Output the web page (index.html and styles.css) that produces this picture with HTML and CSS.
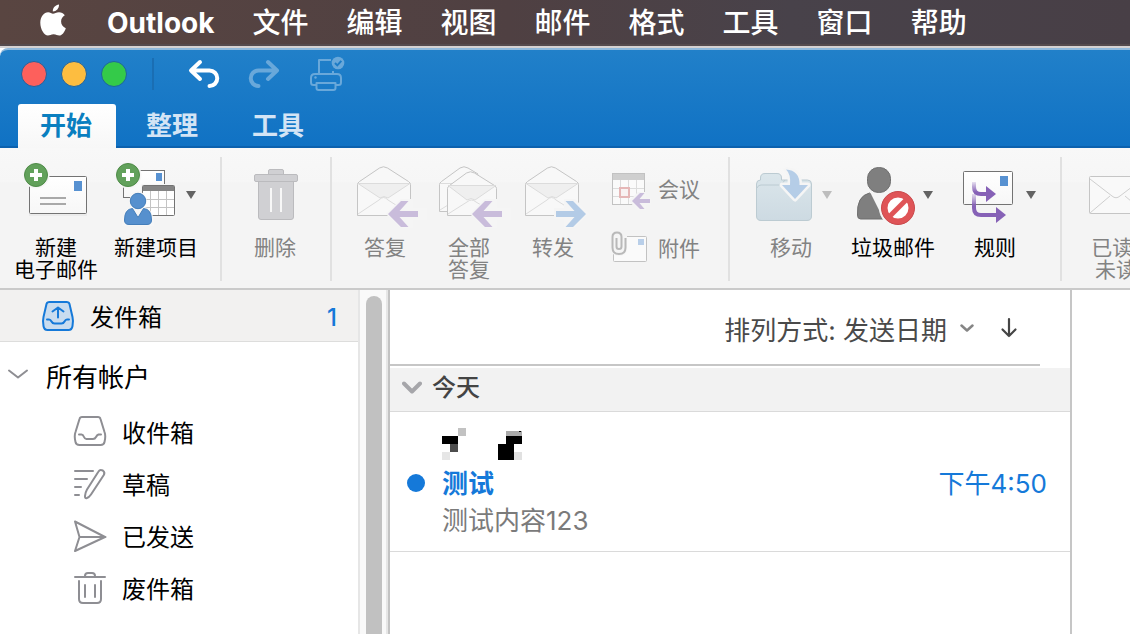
FILE: index.html
```html
<!DOCTYPE html>
<html lang="zh-CN">
<head>
<meta charset="utf-8">
<title>Outlook</title>
<link rel="stylesheet" href="styles.css">
</head>
<body>
<svg width="0" height="0" class="defs" aria-hidden="true">
  <defs>
    <linearGradient id="paper" x1="0" y1="0" x2="0" y2="1"><stop offset="0" stop-color="#fff"/><stop offset="1" stop-color="#f7f7f7"/></linearGradient>
    <linearGradient id="folder" x1="0" y1="0" x2="0" y2="1"><stop offset="0" stop-color="#dbe6eb"/><stop offset="1" stop-color="#cddae2"/></linearGradient>
    <linearGradient id="flow" gradientUnits="userSpaceOnUse" x1="0" y1="181" x2="0" y2="192"><stop offset="0" stop-color="#8661b6" stop-opacity="0.1"/><stop offset="1" stop-color="#8661b6"/></linearGradient>
    <linearGradient id="flow-low" gradientUnits="userSpaceOnUse" x1="0" y1="194" x2="0" y2="206"><stop offset="0" stop-color="#8661b6" stop-opacity="0.2"/><stop offset="1" stop-color="#8661b6"/></linearGradient>
  </defs>
</svg>

<nav class="menubar" aria-label="应用菜单">
  <button class="menu apple" aria-label="Apple">
    <svg width="26" height="32" viewBox="0 0 26 32" fill="#fff"><path d="M13 9.7c1.600 0 3.300-1.500 6-1.500 2.300 0 4.500 1.200 5.800 3.100-2.400 1.500-3.700 3.500-3.700 6.200 0 3.200 1.800 5.500 4.700 6.700-1.200 3.900-3.900 7.400-6.500 7.400-2.200 0-3-1.300-5.700-1.300-2.600 0-3.600 1.300-5.700 1.300C4.200 31.600.3 25.300.3 18.800c0-6.300 3.700-10.500 7.800-10.500 2.200 0 3.600 1.400 4.900 1.400z"/><path d="M19 .4c.3 3.700-2.800 7-6.200 7C12.400 4 15.600.7 19 .4z"/></svg>
  </button>
  <button class="menu app-name">Outlook</button>
  <button class="menu">文件</button>
  <button class="menu">编辑</button>
  <button class="menu">视图</button>
  <button class="menu">邮件</button>
  <button class="menu">格式</button>
  <button class="menu">工具</button>
  <button class="menu">窗口</button>
  <button class="menu">帮助</button>
</nav>

<div class="window">
<header class="titlebar">
  <div class="quick">
    <div class="lights">
      <button class="light red" aria-label="关闭"></button>
      <button class="light yellow" aria-label="最小化"></button>
      <button class="light green" aria-label="全屏"></button>
    </div>
    <span class="quick-sep"></span>
    <button class="tool" aria-label="撤销"><svg width="36" height="36" viewBox="185 56 36 36" fill="none" stroke="#fff" stroke-width="4" stroke-linecap="round" stroke-linejoin="round"><path d="M199 62l-9 8.500 9 8.500M191 70.500h17.500a7.750 7.750 0 010 15.500"/></svg></button>
    <button class="tool" aria-label="重做"><svg width="36" height="36" viewBox="245 56 36 36" fill="none" stroke="#69a8da" stroke-width="4" stroke-linecap="round" stroke-linejoin="round"><path d="M267 62l9 8.500-9 8.500M275 70.500h-17.500a7.750 7.750 0 000 15.500"/></svg></button>
    <button class="tool" aria-label="打印"><svg width="38" height="38" viewBox="308 54 38 38" fill="none" stroke="#69a8da" stroke-width="2"><path d="M319 73V59h12M316 84h-2.500q-2.500 0-2.500-2.500V77q0-4 4-4h22q4 0 4 4v4.500q0 2.500-2.500 2.500H336M316.500 82h19v5q0 2-2 2h-15q-2 0-2-2z" stroke-linejoin="round"/><path d="M333 70v3"/><circle cx="315.500" cy="76.500" r="1.200" fill="#69a8da" stroke="none"/><circle cx="338" cy="62" r="6.300" fill="#69a8da" stroke="none"/><path d="M335 62l2.300 2.400 4-4.500" stroke="#1c7bc6"/></svg></button>
  </div>
  <div class="tabs" role="tablist">
    <button class="tab active" role="tab" aria-selected="true">开始</button>
    <button class="tab" role="tab" aria-selected="false">整理</button>
    <button class="tab" role="tab" aria-selected="false">工具</button>
  </div>
</header>

<section class="ribbon" aria-label="开始">
  <div class="group create">
    <button class="cmd">
      <svg width="84" height="66" viewBox="14 162 84 66"><rect x="29.500" y="176.500" width="57" height="37" rx="1" fill="url(#paper)" stroke="#737373"/><path d="M29 215h58" stroke="#e2e2e2"/><rect x="74" y="181" width="8" height="10" fill="#5791d1"/><path d="M40 198h26M40 204h26" stroke="#a9a9a9" stroke-width="2"/><circle cx="36" cy="175" r="13.500" fill="#f6f6f6"/><circle cx="36" cy="175" r="11.500" fill="#62a15b" stroke="#4e8b47"/><path d="M36 169v12M30 175h12" stroke="#fff" stroke-width="4"/></svg>
      <span>新建<br>电子邮件</span>
    </button>
    <button class="cmd">
      <svg width="84" height="66" viewBox="114 162 84 66"><rect x="123.500" y="170.500" width="41" height="27" fill="url(#paper)" stroke="#737373"/><rect x="156" y="173" width="6" height="8" fill="#5791d1"/><rect x="141" y="184" width="36" height="34" fill="#f6f6f6"/><rect x="142.500" y="185.500" width="32" height="30" rx="1" fill="#fff" stroke="#737373"/><path d="M143 186h31v5h-31z" fill="#858585"/><path d="M150.500 191v24M158.500 191v24M166.500 191v24M143 199.500h31M143 207.500h31" stroke="#c4c4c4"/><circle cx="128" cy="175" r="13.500" fill="#f6f6f6"/><circle cx="128" cy="175" r="11.500" fill="#62a15b" stroke="#4e8b47"/><path d="M128 169v12M122 175h12" stroke="#fff" stroke-width="4"/><path d="M138 191a10 10 0 016.500 16q9.500 2.500 9.500 19h-32q0-16.500 9.500-19A10 10 0 01138 191z" fill="#f6f6f6"/><path d="M138 224.500h-9q-4.500 0-4.500-4.500 0-11 8-11.500l5.500 9 5.500-9q8 .5 8 11.500 0 4.500-4.500 4.500z" fill="#5690ce" stroke="#447eba"/><circle cx="138" cy="201" r="7.700" fill="#5690ce" stroke="#447eba"/><path d="M186 191h10l-5 8z" fill="#636363"/></svg>
      <span>新建项目</span>
    </button>
  </div>
  <div class="group remove">
    <button class="cmd" disabled>
      <svg width="84" height="66" viewBox="233 162 84 66" fill="#d0d0d3" stroke="#bbbbbe"><rect x="268.500" y="169.500" width="15" height="6" rx="1.500"/><path d="M258.500 181h35v36q0 2.500-2.500 2.500h-30q-2.500 0-2.500-2.500z"/><rect x="254.500" y="174.500" width="43" height="7" rx="1.500"/><path d="M271 188v24M281 188v24" stroke="#f7f7f7" stroke-width="2"/></svg>
      <span>删除</span>
    </button>
  </div>
  <div class="group respond">
    <button class="cmd" disabled>
      <svg width="84" height="66" viewBox="343 162 84 66"><path d="M357.500 215.500v-31q0-1.500 2-3l20-13.500q4-2.500 8 0l21 13.500q2 1.500 2 3v31z" fill="#f8f8f8" stroke="#c5c5c5"/><path d="M358 183.500h52L388 198q-4-3-8 0z" fill="#efefef" stroke="#dcdcdc"/><path d="M358 214l21-14q4.500-5 9 0l22 14" fill="none" stroke="#dcdcdc"/><path d="M386 214l15-15h12v9h14v12h-14v9h-12z" fill="#f5f5f5"/><path d="M388 214l13-13h7.500l-9 10H418v6h-18.500l9 10H401z" fill="#c9bcdb"/></svg>
      <span>答复</span>
    </button>
    <button class="cmd" disabled>
      <svg width="84" height="66" viewBox="427 162 84 66"><path d="M439.500 211.500v-27q0-1.500 2-3L460 168q4-2.500 8 0l10 6-20 37.500z" fill="#f8f8f8" stroke="#c5c5c5"/><path d="M440 183.500h15M440 210l8-5" stroke="#dcdcdc"/><path d="M447.500 215.500v-27q0-1.500 2-3l17-12.500q4-2.500 8 0l20 12.500q2 1.500 2 3v27z" fill="#f8f8f8" stroke="#c5c5c5"/><path d="M448 185.500h48L475 200q-4-3-8 0z" fill="#efefef" stroke="#dcdcdc"/><path d="M448 214l19-12q4.500-4 9 0l20 12" fill="none" stroke="#dcdcdc"/><path d="M470 214l15-15h12v9h14v12h-14v9h-12z" fill="#f5f5f5"/><path d="M472 214l13-13h7.500l-9 10H502v6h-18.500l9 10H485z" fill="#c9bcdb"/></svg>
      <span>全部<br>答复</span>
    </button>
    <button class="cmd" disabled>
      <svg width="84" height="66" viewBox="511 162 84 66"><path d="M525.500 215.500v-31q0-1.500 2-3l20-13.500q4-2.500 8 0l21 13.500q2 1.500 2 3v31z" fill="#f8f8f8" stroke="#c5c5c5"/><path d="M526 183.500h52L556 198q-4-3-8 0z" fill="#efefef" stroke="#dcdcdc"/><path d="M526 214l21-14q4.500-5 9 0l22 14" fill="none" stroke="#dcdcdc"/><path d="M554 208h10v-9h11l15 15-15 14h-11v-9h-10z" fill="#f5f5f5"/><path d="M586 214l-13-13h-7.500l9 10H556v6h18.500l-9 10h7.500z" fill="#b3cbe6"/></svg>
      <span>转发</span>
    </button>
    <div class="stack">
      <button class="small" disabled>
        <svg width="40" height="40" viewBox="611 170 40 40"><rect x="612.500" y="173.500" width="32" height="31" fill="#fafafa" stroke="#c2c2c2"/><path d="M613 174h31v6h-31z" fill="#cfcfcf"/><path d="M620.500 180v24M628.500 180v24M636.500 180v24M613 188.500h31M613 196.500h31" stroke="#dcdcdc"/><rect x="620" y="188" width="9" height="9" fill="#f8f2f2" stroke="#e5b7b7" stroke-width="2"/><path d="M629 201l9-9h8v6h5v7h-5v6h-8z" fill="#f5f5f5"/><path d="M632 201l8-8h4.500l-5 6H650v4h-10.500l5 6H640z" fill="#c9bcdb"/></svg>
        <span>会议</span>
      </button>
      <button class="small" disabled>
        <svg width="40" height="40" viewBox="611 229 40 40"><rect x="613.500" y="236.500" width="33" height="25" rx="1" fill="#fafafa" stroke="#c2c2c2"/><rect x="638" y="239" width="6" height="6" fill="#b9cfe9"/><path d="M611 236h16v12q0 8-8 8-6 0-8-5z" fill="#f5f5f5"/><path d="M616.500 238v8.500q0 2.500 2.500 2.500t2.500-2.500V237q0-4.500-4.500-4.500t-4.500 4.500v10.500q0 6.500 6.500 6.500t6.500-6.500V238" fill="none" stroke="#b9b9b9" stroke-width="2"/></svg>
        <span>附件</span>
      </button>
    </div>
  </div>
  <div class="group organize">
    <button class="cmd" disabled>
      <svg width="84" height="66" viewBox="749 162 84 66"><path d="M756.500 216v-32q0-4 4-4v-2q0-4.500 4.500-4.500h12q4.500 0 4.500 4.500v2h26q4 0 4 4v32q0 4.500-4.500 4.500H761q-4.500 0-4.500-4.500z" fill="url(#folder)" stroke="#bccbd2"/><path d="M757 188q1-3 4-3h20l4-5" fill="none" stroke="#bccbd2"/><path d="M786 169.500q14 1 13.500 15.500h8.500l-13 14-13-14h8q1-11-4-15.500z" fill="#b5cde7" stroke="#f5f5f5" stroke-width="5" stroke-linejoin="round"/><path d="M786 169.500q14 1 13.500 15.500h8.500l-13 14-13-14h8q1-11-4-15.500z" fill="#b5cde7"/><path d="M822 191h10l-5 8z" fill="#bdbdbd"/></svg>
      <span>移动</span>
    </button>
    <button class="cmd">
      <svg width="84" height="66" viewBox="852 162 84 66"><path d="M858.500 215q-1-19 12-22 9 8 14 1l10 7v18h-33q-3 0-3-4z" fill="#7f7f7f" stroke="#6f6f6f"/><path d="M871 192l12 24 8-24z" fill="#f5f5f5"/><rect x="868.500" y="167.500" width="23" height="25" rx="11" fill="#7f7f7f" stroke="#6f6f6f"/><circle cx="899" cy="208" r="19" fill="#f5f5f5"/><circle cx="899" cy="208" r="13.500" fill="#fff" stroke="#df5457" stroke-width="6"/><path d="M890 217l18-18" stroke="#df5457" stroke-width="5"/><circle cx="899" cy="208" r="16.500" fill="none" stroke="#c9494c"/><path d="M924 191h10l-5 8z" fill="#636363"/></svg>
      <span>垃圾邮件</span>
    </button>
    <button class="cmd">
      <svg width="84" height="66" viewBox="953 162 84 66"><rect x="963.500" y="171.500" width="49" height="33" rx="1" fill="url(#paper)" stroke="#737373"/><rect x="1000" y="176" width="8" height="10" fill="#5791d1"/><path d="M974 182v5q0 7 7 7h6" fill="none" stroke="url(#flow)" stroke-width="4"/><path d="M986 186l10 8-10 8z" fill="#8661b6"/><path d="M974 194v14q0 7 7 7h15" fill="none" stroke="url(#flow-low)" stroke-width="4"/><path d="M996 207l10 8-10 8z" fill="#8661b6"/><path d="M1026 191h10l-5 8z" fill="#636363"/></svg>
      <span>规则</span>
    </button>
  </div>
  <div class="group status">
    <button class="cmd" disabled>
      <svg width="84" height="66" viewBox="1074 162 84 66"><rect x="1089.500" y="176.500" width="56" height="37" rx="1" fill="#f9f9f9" stroke="#c5c5c5"/><path d="M1090 213l20-17M1145 213l-20-17M1090 179l22 17q4 3.500 8 0l25-19" fill="none" stroke="#cfcfcf"/></svg>
      <span>已读/<br>未读</span>
    </button>
  </div>
</section>

<main class="content">
  <nav class="sidebar" aria-label="文件夹">
    <a class="folder outbox" href="#outbox">
      <svg width="34" height="32" viewBox="41 299 34 32" fill="none" stroke="#1579d9" stroke-width="2" stroke-linejoin="round" stroke-linecap="round"><path d="M49.500 301h17q2.500 0 3 2l3 13q1 4 0 9-.6 4-4 4h-21q-3.400 0-4-4-1-5 0-9l3-13q.5-2 3-2z" fill="#c9dcef"/><path d="M47 318.500h2q1.500 0 2.500 2t3 2h7q2 0 3-2t2.500-2h2M58 316.500v-10M52.500 310.500l5.500-4 5.500 4"/></svg>
      <span>发件箱</span>
      <span class="count">1</span>
    </a>
    <button class="accounts" aria-expanded="true">
      <svg width="22" height="12" viewBox="0 0 22 12" fill="none" stroke="#8e8e93" stroke-width="2" stroke-linecap="round" stroke-linejoin="round"><path d="M2 2.500l9 7 9-7"/></svg>
      <span>所有帐户</span>
    </button>
    <a class="folder" href="#inbox">
      <svg width="34" height="36" viewBox="73 414 34 36" fill="none" stroke="#8e8e93" stroke-width="2" stroke-linejoin="round" stroke-linecap="round"><path d="M82 417h16q2 0 2.500 2l4 13q1.500 4 0 10-.6 3-4 3h-21q-3.400 0-4-3-1.500-6 0-10l4-13q.5-2 2.500-2z"/><path d="M79 434.500h2.500q1.500 0 2.500 2.500t3 2h6q2 0 3-2t2.500-2.500h2.500"/></svg>
      <span>收件箱</span>
    </a>
    <a class="folder" href="#drafts">
      <svg width="34" height="36" viewBox="73 466 34 36" fill="none" stroke="#8e8e93" stroke-width="2" stroke-linejoin="round" stroke-linecap="round"><path d="M75 471h18M75 479h12M75 487h6M75 495h4M98.500 471.500q1.500-2.500 4.300-1 2.500 1.800 1 4.500L91 494.500q-2 3-4.500 3.800-1.800 0-1.500-2.300.5-4 2-6.500z"/></svg>
      <span>草稿</span>
    </a>
    <a class="folder" href="#sent">
      <svg width="34" height="36" viewBox="73 518 34 36" fill="none" stroke="#8e8e93" stroke-width="2" stroke-linejoin="round" stroke-linecap="round"><path d="M75 521.500l30 15.500L75 551l4.500-14zM79.500 537h26"/></svg>
      <span>已发送</span>
    </a>
    <a class="folder" href="#deleted">
      <svg width="34" height="36" viewBox="73 570 34 36" fill="none" stroke="#8e8e93" stroke-width="2" stroke-linejoin="round" stroke-linecap="round"><path d="M75 577h30M85 577v-1q0-3 3-3h4q3 0 3 3v1M79 581v18q0 4 4 4h14q4 0 4-4v-18M85 585v12M95 585v12"/></svg>
      <span>废件箱</span>
    </a>
  </nav>
  <div class="scrollbar"><div class="thumb"></div></div>
  <section class="list" aria-label="邮件列表">
    <div class="sort">
      <button class="sort-by">排列方式: 发送日期
        <svg width="14" height="10" viewBox="0 0 14 10" fill="none" stroke="#858585" stroke-width="2.500" stroke-linecap="round" stroke-linejoin="round"><path d="M1.500 2.500L7 7.500l5.500-5"/></svg>
      </button>
      <button class="sort-dir" aria-label="降序"><svg width="18" height="22" viewBox="0 0 18 22" fill="none" stroke="#454545" stroke-width="2.200" stroke-linecap="round" stroke-linejoin="round"><path d="M9 2v17M2.500 12.500L9 19l6.500-6.500"/></svg></button>
    </div>
    <button class="day" aria-expanded="true">
      <svg width="20" height="14" viewBox="0 0 20 14" fill="none" stroke="#a6a6aa" stroke-width="4" stroke-linecap="round" stroke-linejoin="round"><path d="M2 2.500l8 8 8-8"/></svg>
      <span>今天</span>
    </button>
    <article class="message">
      <svg class="sender" width="82" height="32" viewBox="0 0 82 32" shape-rendering="crispEdges"><path d="M16 0h8v8h-8z" fill="#c2c2c2"/><path d="M0 8h16v8H0z"/><path d="M8 16h8v8H8z" fill="#4d4d4d"/><path d="M0 24h8v8H0z" fill="#e6e6e6"/><path d="M64 3h16v5H64z" fill="#aaa"/><path d="M77 3h2v1h-2zM64 8h16v8h-8v16H56V16h8z"/><path d="M72 24h8v8h-8z" fill="#e1e1e1"/></svg>
      <div class="subject"><span class="unread"></span><strong>测试</strong><time>下午4:50</time></div>
      <p class="preview">测试内容123</p>
    </article>
  </section>
  <section class="reading" aria-label="阅读窗格"></section>
</main>
</div>
</body>
</html>
```
FILE: styles.css
```css
* { box-sizing: border-box; }
html, body { height: 100%; }
body {
  margin: 0;
  display: flex;
  flex-direction: column;
  overflow: hidden;
  background: #fff;
  color: #000;
  font-family: Inter, "Noto Sans CJK SC", sans-serif;
}
button {
  margin: 0;
  padding: 0;
  border: 0;
  background: none;
  color: inherit;
  font: inherit;
}
a { color: inherit; text-decoration: none; }
svg { display: block; flex: none; }
.defs { position: absolute; }

/* System menu bar */
.menubar {
  flex: none;
  display: flex;
  align-items: center;
  gap: 38px;
  height: 46px;
  padding-left: 40px;
  border-bottom: 2px solid #554b4e;
  background: linear-gradient(90deg, #594541 0%, #4f4042 45%, #48424a 70%, #483f46 100%);
  color: #fff;
  font-size: 28px;
  line-height: 44px;
  white-space: nowrap;
}
.menu { padding-top: 1px; font-weight: 500; }
.apple { padding: 0 0 4px; margin-right: 3px; }
.app-name { font-weight: 700; }

/* Window */
.window {
  flex: 1;
  min-height: 0;
  display: flex;
  flex-direction: column;
  border-top: 2px solid #d5d2d2;
}
.titlebar {
  flex: none;
  border-top: 2px solid #8fb9dc;
  border-bottom: 2px solid #0c61ae;
  border-top-left-radius: 8px;
  background: linear-gradient(#2180c9, #1072c4);
}
.quick {
  display: flex;
  align-items: center;
  height: 54px;
  padding: 0 21px 6px;
}
.lights { display: flex; gap: 14px; }
.light {
  width: 26px;
  height: 26px;
  border: 1px solid #1e63a0;
  border-radius: 50%;
}
.red { background: #fd605c; }
.yellow { background: #fdbd40; }
.green { background: #34ca49; }
.quick-sep {
  width: 2px;
  height: 32px;
  margin: 0 32px 0 25px;
  background: #1a6eb3;
}
.tool + .tool { margin-left: 24px; }
.tool:last-child { margin-left: 26px; }
.tabs { display: flex; gap: 8px; height: 44px; padding-left: 18px; margin-bottom: -2px; }
.tab {
  padding: 0 24px 0 22px;
  border-radius: 3px 3px 0 0;
  color: #d3e4f5;
  font-size: 26px;
  font-weight: 700;
  line-height: 42px;
}
.tab.active { background: linear-gradient(#fff, #f7f7f7); color: #0a7fc0; }

/* Ribbon */
.ribbon {
  flex: none;
  display: flex;
  overflow: hidden;
  padding: 9px 0 7px;
  border-bottom: 2px solid #cacaca;
  background: linear-gradient(#f8f8f8 0, #f6f6f6 24%, #f4f4f4 25%, #f4f4f4 100%);
  font-size: 21px;
  line-height: 22px;
}
.group {
  flex: none;
  display: flex;
  align-items: flex-start;
  height: 124px;
  padding-top: 5px;
  border-right: 2px solid #e1e1e1;
}
.create { gap: 16px; padding-left: 14px; padding-right: 22px; }
.remove { padding-left: 11px; padding-right: 13px; }
.respond { padding-left: 11px; padding-right: 28px; }
.organize { gap: 18px; padding-left: 19px; padding-right: 23px; }
.status { padding-left: 12px; }
.cmd {
  display: flex;
  flex-direction: column;
  align-items: center;
  gap: 9px;
  width: 84px;
  white-space: nowrap;
}
.cmd:disabled, .small:disabled { color: #828282; }
.stack { display: grid; gap: 19px; padding: 8px 0 0 16px; }
.small { display: flex; align-items: center; gap: 7px; height: 40px; }

/* Panes */
.content { flex: 1; min-height: 0; display: flex; }
.sidebar {
  flex: none;
  width: 360px;
  border-right: 2px solid #e6e6e6;
  font-size: 24px;
}
.folder {
  display: flex;
  align-items: center;
  gap: 15px;
  height: 52px;
  padding: 0 21px 4px 73px;
}
.folder span { padding-bottom: 2px; }
.outbox {
  padding: 0 21px 0 41px;
  border-bottom: 1px solid #dddddc;
  background: #f2f1f0;
}
.outbox span { padding: 0; }
.outbox .count {
  margin-left: auto;
  padding-top: 4px;
  color: #1579d9;
  font-weight: 500;
}
.accounts {
  display: flex;
  align-items: center;
  gap: 17px;
  height: 62px;
  margin-top: 4px;
  padding: 0 0 4px 7px;
  font-size: 26px;
}
.accounts svg { margin-bottom: 2px; }
.scrollbar {
  flex: none;
  width: 28px;
  padding: 6px 4px 0 6px;
  border-right: 2px solid #e6e6e6;
  background: #f9f9f9;
}
.thumb { width: 16px; height: 100%; border-radius: 8px 8px 0 0; background: #c1c1c1; }

.list {
  flex: none;
  width: 684px;
  border-left: 2px solid #c3c3c3;
  border-right: 2px solid #c6c6c6;
  font-size: 26px;
}
.sort {
  display: flex;
  align-items: center;
  justify-content: flex-end;
  gap: 26px;
  height: 76px;
  margin: 0 30px 2px 0;
  padding: 2px 22px 0 0;
  border-bottom: 2px solid #c6c6c6;
  color: #4a4a4a;
}
.sort-by { display: flex; align-items: center; gap: 13px; }
.day {
  display: flex;
  align-items: center;
  gap: 10px;
  width: 100%;
  height: 44px;
  padding: 0 0 4px 12px;
  border-bottom: 1px solid #dadada;
  background: #f2f2f2;
  color: #444;
  font-size: 24px;
  font-weight: 500;
}
.day span { padding-bottom: 4px; }
.message { padding: 16px 23px 15px 17px; border-bottom: 1px solid #dadada; }
.sender { margin-left: 35px; }
.subject {
  display: flex;
  align-items: center;
  height: 46px;
  color: #1579d9;
}
.subject strong, .subject time { padding-bottom: 4px; }
.unread {
  width: 18px;
  height: 18px;
  margin-right: 17px;
  border-radius: 50%;
  background: #1579d9;
}
.subject time { margin-left: auto; }
.preview { margin: 0 0 0 35px; color: #7b7b7b; line-height: 30px; }
.reading { flex: 1; background: #fff; }
```
